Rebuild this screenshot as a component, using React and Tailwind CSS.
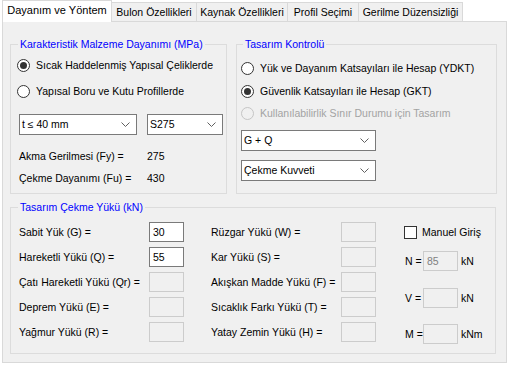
import React from "react";

function Radio({ checked, disabled, label }) {
  return (
    <div className="flex h-4 items-center gap-[6px] whitespace-nowrap">
      <span
        className={`flex h-[13px] w-[13px] shrink-0 items-center justify-center rounded-full border ${
          disabled ? "border-[#c5c5c5] bg-[#f0f0f0]" : "border-[#333333] bg-white"
        }`}
      >
        {checked && <span className="h-[7px] w-[7px] rounded-full bg-[#333333]" />}
      </span>
      <span className={disabled ? "text-[#a3a3a3]" : ""}>{label}</span>
    </div>
  );
}

function Combo({ value, className }) {
  return (
    <div className={`flex h-[21px] items-center justify-between border border-[#7a7a7a] bg-white pl-[2px] pr-[6px] ${className}`}>
      <span>{value}</span>
      <svg width="9" height="5" viewBox="0 0 9 5">
        <path d="M0.5 0.5 L4.5 4.5 L8.5 0.5" stroke="#606060" fill="none" />
      </svg>
    </div>
  );
}

function Field({ value, enabled }) {
  return (
    <div
      className={`flex h-[20px] w-[35px] shrink-0 items-center px-[3px] ${
        enabled ? "border border-[#7a7a7a] bg-white" : "border border-[#cccccc] bg-[#f0f0f0] text-[#808080]"
      }`}
    >
      {value}
    </div>
  );
}

// legend sits at the fieldset's padding edge, so padding goes on the inner div
function Group({ title, className, bodyClass, legendClass = "ml-[7px]", children }) {
  return (
    <fieldset className={`border border-[#dcdcdc] ${className}`}>
      <legend className={`whitespace-nowrap px-[2px] text-[#0000ff] ${legendClass}`}>{title}</legend>
      <div className={bodyClass}>{children}</div>
    </fieldset>
  );
}

function LoadRow({ label, value, enabled }) {
  return (
    <div className="flex h-[20px] items-center justify-between whitespace-nowrap">
      <span>{label}</span>
      <Field value={value} enabled={enabled} />
    </div>
  );
}

function Unit({ label, unit, value }) {
  return (
    <div className="flex h-[20px] items-center whitespace-nowrap">
      <span className="w-[18px] shrink-0">{label}</span>
      <Field value={value} />
      <span className="ml-[3px]">{unit}</span>
    </div>
  );
}

export default function App() {
  const tabs = [
    { label: "Bulon Özellikleri", w: "w-[85px]" },
    { label: "Kaynak Özellikleri", w: "w-[91px]" },
    { label: "Profil Seçimi", w: "w-[71px]" },
    { label: "Gerilme Düzensizliği", w: "w-[104px]" },
  ];

  return (
    <div className="h-[366px] w-[510px] overflow-hidden bg-white font-['Liberation_Sans',Arial,sans-serif] text-[10.5px] leading-[13px] text-black">
      <div className="flex h-[21px] items-end pl-[2px]">
        <div className="relative z-10 -mb-px flex h-[22px] w-[110px] items-start justify-center whitespace-nowrap border-x border-t border-[#d9d9d9] bg-white pt-[3px] text-[11px]">
          Dayanım ve Yöntem
        </div>
        {tabs.map((t) => (
          <div
            key={t.label}
            className={`flex h-[19px] items-center justify-center whitespace-nowrap border-r border-t border-[#d9d9d9] bg-[#f0f0f0] ${t.w}`}
          >
            {t.label}
          </div>
        ))}
      </div>

      <div className="ml-[2px] h-[342px] w-[505px] border border-[#d9d9d9] bg-[#f0f0f0] pl-[7px] pt-[16px]">
        <div className="flex gap-[9px]">
          <Group title="Karakteristik Malzeme Dayanımı (MPa)" className="h-[156px] w-[217px]" bodyClass="pl-[6px]">
            <div className="mt-[6px]">
              <Radio checked label="Sıcak Haddelenmiş Yapısal Çeliklerde" />
            </div>
            <div className="mt-[10px]">
              <Radio label="Yapısal Boru ve Kutu Profillerde" />
            </div>
            <div className="ml-[2px] mt-[15px] flex gap-[10px]">
              <Combo value="t ≤ 40 mm" className="w-[118px]" />
              <Combo value="S275" className="w-[76px]" />
            </div>
            <div className="ml-[2px] mt-[13px] flex h-4 items-center whitespace-nowrap">
              <span className="w-[128px]">Akma Gerilmesi (Fy) =</span>
              <span>275</span>
            </div>
            <div className="ml-[2px] mt-[6px] flex h-4 items-center whitespace-nowrap">
              <span className="w-[128px]">Çekme Dayanımı (Fu) =</span>
              <span>430</span>
            </div>
          </Group>

          <Group title="Tasarım Kontrolü" legendClass="ml-[6px]" className="h-[156px] w-[261px]" bodyClass="pl-[4px]">
            <div className="mt-[9px]">
              <Radio label="Yük ve Dayanım Katsayıları ile Hesap (YDKT)" />
            </div>
            <div className="mt-[7px]">
              <Radio checked label="Güvenlik Katsayıları ile Hesap (GKT)" />
            </div>
            <div className="mt-[6px]">
              <Radio disabled label="Kullanılabilirlik Sınır Durumu için Tasarım" />
            </div>
            <Combo value="G + Q" className="mt-[9px] w-[135px]" />
            <Combo value="Çekme Kuvveti" className="mt-[9px] w-[135px]" />
          </Group>
        </div>

        <Group title="Tasarım Çekme Yükü (kN)" className="mt-[7px] h-[153px] w-[486px]" bodyClass="pl-[8px]">
          <div className="mt-[8px] flex">
            <div className="flex w-[165px] flex-col gap-[5px]">
              <LoadRow label="Sabit Yük (G) =" value="30" enabled />
              <LoadRow label="Hareketli Yükü (Q) =" value="55" enabled />
              <LoadRow label="Çatı Hareketli Yükü (Qr) =" />
              <LoadRow label="Deprem Yükü (E) =" />
              <LoadRow label="Yağmur Yükü (R) =" />
            </div>
            <div className="ml-[27px] flex w-[165px] flex-col gap-[5px]">
              <LoadRow label="Rüzgar Yükü (W) =" />
              <LoadRow label="Kar Yükü (S) =" />
              <LoadRow label="Akışkan Madde Yükü (F) =" />
              <LoadRow label="Sıcaklık Farkı Yükü (T) =" />
              <LoadRow label="Yatay Zemin Yükü (H) =" />
            </div>
            <div className="ml-[28px] flex flex-col">
              <div className="flex h-[20px] items-center gap-[5px] whitespace-nowrap">
                <span className="h-[13px] w-[13px] border border-[#333333] bg-white" />
                <span>Manuel Giriş</span>
              </div>
              <div className="ml-[1px] mt-[9px]">
                <Unit label="N =" unit="kN" value="85" />
              </div>
              <div className="ml-[1px] mt-[17px]">
                <Unit label="V =" unit="kN" />
              </div>
              <div className="ml-[1px] mt-[16px]">
                <Unit label="M =" unit="kNm" />
              </div>
            </div>
          </div>
        </Group>
      </div>
    </div>
  );
}
